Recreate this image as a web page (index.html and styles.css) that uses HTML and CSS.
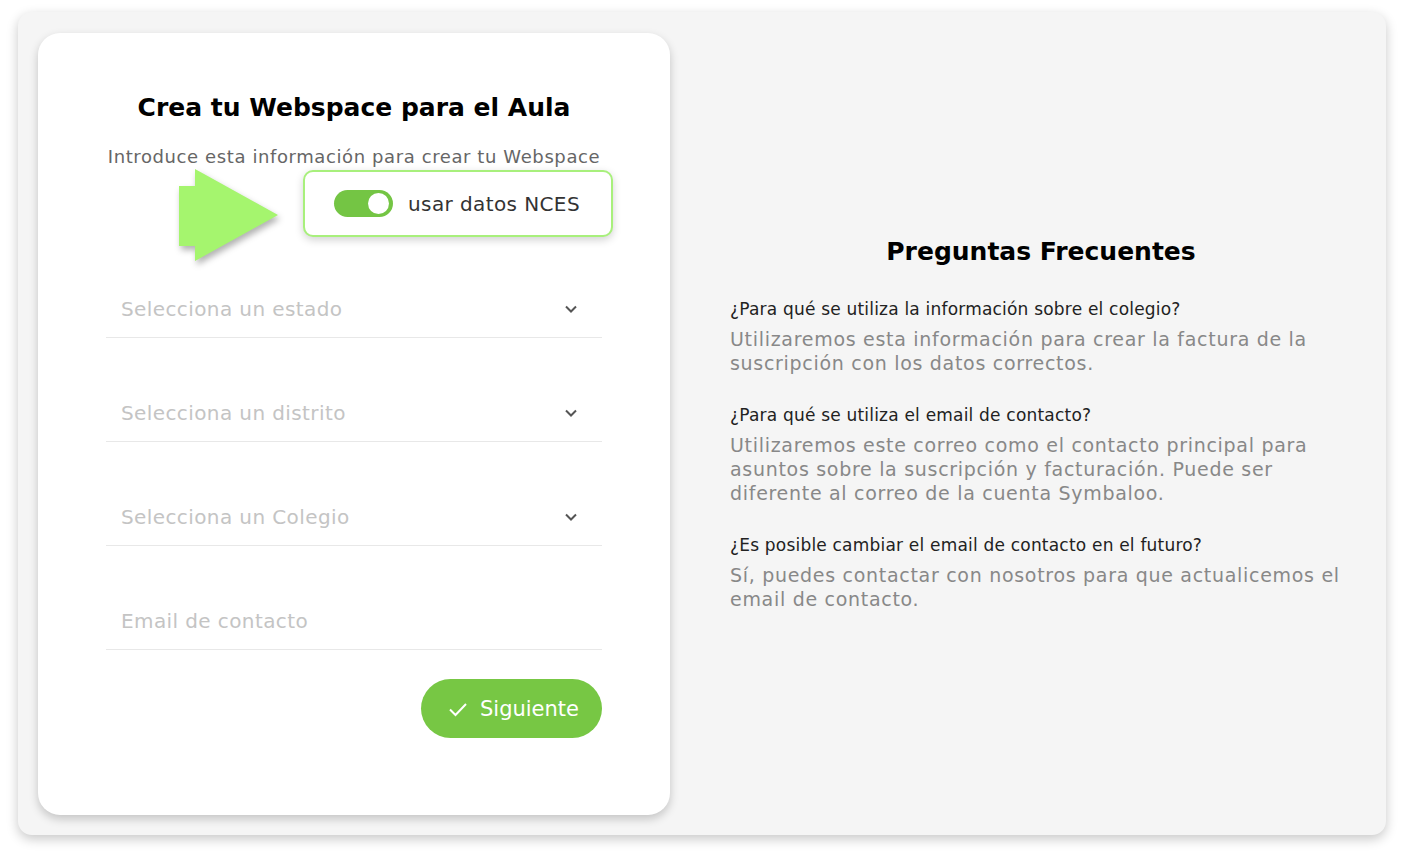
FILE: index.html
```html
<!DOCTYPE html>
<html lang="es">
<head>
    <meta charset="UTF-8">
    <meta name="viewport" content="width=device-width, initial-scale=1.0">
    <title>Crea tu Webspace para el Aula</title>
    <link rel="stylesheet" href="styles.css">
</head>
<body>

    <div class="panel">
        <div class="form-card">
            <h1 class="form-title">Crea tu Webspace para el Aula</h1>
            <p class="form-intro">Introduce esta información para crear tu Webspace</p>

            <div class="nces-row">
                <svg class="hint-arrow" width="110" height="104" viewBox="0 0 110 104">
                    <polygon points="4,19 20,19 20,2 103,48 20,94 20,79 4,79" fill="#a5f56e"/>
                </svg>
                <label class="nces-box">
                    <span class="switch"><span class="knob"></span></span>
                    <span class="nces-label">usar datos NCES</span>
                </label>
            </div>

            <div class="field">
                <span class="placeholder">Selecciona un estado</span>
                <svg class="chevron" width="14" height="10" viewBox="0 0 14 10"><path d="M2 2.5 L7 7.5 L12 2.5" fill="none" stroke="#555" stroke-width="2"/></svg>
            </div>
            <div class="field">
                <span class="placeholder">Selecciona un distrito</span>
                <svg class="chevron" width="14" height="10" viewBox="0 0 14 10"><path d="M2 2.5 L7 7.5 L12 2.5" fill="none" stroke="#555" stroke-width="2"/></svg>
            </div>
            <div class="field">
                <span class="placeholder">Selecciona un Colegio</span>
                <svg class="chevron" width="14" height="10" viewBox="0 0 14 10"><path d="M2 2.5 L7 7.5 L12 2.5" fill="none" stroke="#555" stroke-width="2"/></svg>
            </div>
            <div class="field">
                <span class="placeholder">Email de contacto</span>
            </div>

            <div class="actions">
                <button class="next-button">
                    <svg width="20" height="16" viewBox="0 0 20 16"><path d="M2 8.5 L7.5 14 L18 3" fill="none" stroke="#ffffff" stroke-width="2"/></svg>
                    Siguiente
                </button>
            </div>
        </div>

        <div class="faq-side">
            <div class="faq">
                <h2 class="faq-title">Preguntas Frecuentes</h2>

                <div class="faq-item">
                    <p class="faq-question">¿Para qué se utiliza la información sobre el colegio?</p>
                    <p class="faq-answer">Utilizaremos esta información para crear la factura de la<br>suscripción con los datos correctos.</p>
                </div>

                <div class="faq-item">
                    <p class="faq-question">¿Para qué se utiliza el email de contacto?</p>
                    <p class="faq-answer">Utilizaremos este correo como el contacto principal para<br>asuntos sobre la suscripción y facturación. Puede ser<br>diferente al correo de la cuenta Symbaloo.</p>
                </div>

                <div class="faq-item">
                    <p class="faq-question">¿Es posible cambiar el email de contacto en el futuro?</p>
                    <p class="faq-answer">Sí, puedes contactar con nosotros para que actualicemos el<br>email de contacto.</p>
                </div>
            </div>
        </div>
    </div>

</body>
</html>
```

FILE: styles.css
```css
body {
    font-family: "DejaVu Sans", Arial, sans-serif;
    background-color: #ffffff;
    margin: 0;
    padding: 12px 18px 21px 18px;
}

.panel {
    display: flex;
    background-color: #f5f5f5;
    border-radius: 14px;
    padding: 21px 20px 20px 20px;
    box-shadow: 0 4px 12px rgba(0, 0, 0, 0.22);
    height: 823px;
    box-sizing: border-box;
}

.form-card {
    width: 632px;
    flex-shrink: 0;
    background-color: #ffffff;
    border-radius: 22px;
    padding: 57px 68px 0 68px;
    box-sizing: border-box;
    box-shadow: 0 4px 10px rgba(0, 0, 0, 0.2);
}

.form-title {
    margin: 0;
    text-align: center;
    font-size: 25px;
    font-weight: 700;
    color: #000000;
    line-height: 36px;
}

.form-intro {
    margin: 19px 0 0 0;
    text-align: center;
    font-size: 18px;
    letter-spacing: 0.6px;
    color: #666666;
    line-height: 24px;
    white-space: nowrap;
}

.nces-row {
    position: relative;
    display: flex;
    justify-content: flex-end;
    margin-right: -11px;
    margin-top: 1px;
}

.hint-arrow {
    position: absolute;
    left: 69px;
    top: -3px;
    filter: drop-shadow(2px 4px 3px rgba(0, 0, 0, 0.3));
}

.nces-box {
    display: flex;
    align-items: center;
    width: 310px;
    height: 67px;
    box-sizing: border-box;
    border: 2px solid #a8f07c;
    border-radius: 10px;
    padding-left: 29px;
    box-shadow: 0 3px 8px rgba(0, 0, 0, 0.18);
    background-color: #ffffff;
}

.switch {
    position: relative;
    width: 59px;
    height: 27px;
    border-radius: 14px;
    background-color: #74c544;
}

.knob {
    position: absolute;
    right: 4px;
    top: 3px;
    width: 21px;
    height: 21px;
    border-radius: 50%;
    background-color: #ffffff;
}

.nces-label {
    margin-left: 15px;
    font-size: 20px;
    letter-spacing: 0.4px;
    color: #333333;
}

.field {
    display: flex;
    align-items: center;
    justify-content: space-between;
    height: 56px;
    padding: 0 24px 0 15px;
    border-bottom: 1px solid #e8e8e8;
    margin-top: 47px;
}

.nces-row + .field {
    margin-top: 44px;
}

.placeholder {
    font-size: 20px;
    letter-spacing: 0.4px;
    color: #c4c4c4;
}

.actions {
    display: flex;
    justify-content: flex-end;
    margin-top: 29px;
}

.next-button {
    display: flex;
    align-items: center;
    gap: 12px;
    width: 181px;
    height: 59px;
    justify-content: center;
    border: none;
    border-radius: 30px;
    background-color: #77c744;
    color: #ffffff;
    font-family: "DejaVu Sans", Arial, sans-serif;
    font-size: 21px;
    padding-left: 10px;
    cursor: pointer;
}

.faq-side {
    flex: 1;
    display: flex;
    align-items: center;
    padding: 0 14px 2px 60px;
}

.faq {
    width: 100%;
}

.faq-title {
    margin: 0 0 29px 0;
    text-align: center;
    font-size: 25px;
    line-height: 34px;
    font-weight: 700;
    color: #000000;
}

.faq-item {
    margin-bottom: 29px;
}

.faq-item:last-child {
    margin-bottom: 0;
}

.faq-question {
    margin: 0 0 7px 0;
    font-size: 17px;
    letter-spacing: 0.2px;
    line-height: 22px;
    color: #222222;
}

.faq-answer {
    margin: 0;
    font-size: 19px;
    letter-spacing: 0.7px;
    line-height: 24px;
    color: #888888;
}
```
